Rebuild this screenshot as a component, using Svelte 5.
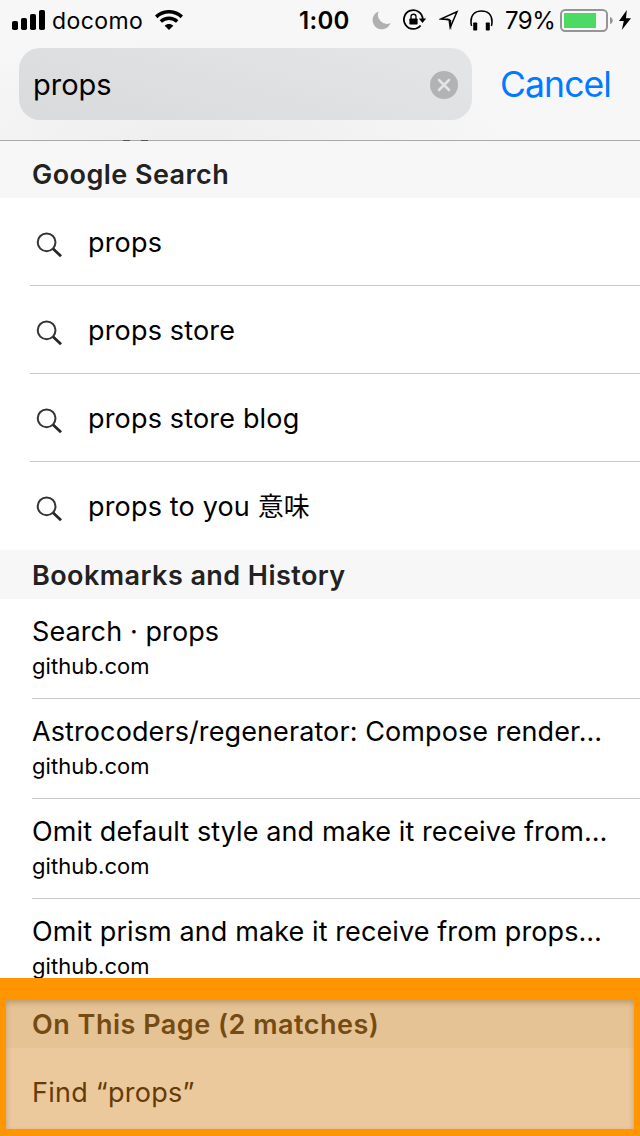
<script>
  const suggestions = [
    { text: 'props' },
    { text: 'props store' },
    { text: 'props store blog' },
    { text: 'props to you ', cjk: '意味' }
  ];
  const history = [
    { title: 'Search · props' },
    { title: 'Astrocoders/regenerator: Compose render…' },
    { title: 'Omit default style and make it receive from…' },
    { title: 'Omit prism and make it receive from props…' }
  ];
</script>

<main>
  <header>
    <div class="status">
      <svg class="signal" width="33" height="20" viewBox="0 0 33 20">
        <rect x="0" y="11" width="6" height="9" rx="1.8" />
        <rect x="9" y="8" width="6" height="12" rx="1.8" />
        <rect x="18" y="4" width="6" height="16" rx="1.8" />
        <rect x="27" y="0" width="6" height="20" rx="1.8" />
      </svg>
      <span class="carrier">docomo</span>
      <svg class="wifi" width="28" height="20" viewBox="0 0 28 20">
        <path d="M1.2 6.8C8.500.1 19.500.1 26.800 6.800" fill="none" stroke="#000" stroke-width="3.600" />
        <path d="M5.800 11.600C10.500 7.200 17.500 7.200 22.200 11.600" fill="none" stroke="#000" stroke-width="3.400" />
        <path d="M9.700 15.800C12 13.300 16 13.300 18.300 15.800L14 20Z" />
      </svg>
      <span class="time">1:00</span>
      <svg class="moon" width="19" height="19" viewBox="0 0 19 19">
        <path d="M6.600.500A9.200 9.200 0 1 0 18.500 12.100A9 9 0 0 1 6.600.500Z" fill="#b0b0b1" />
      </svg>
      <svg class="lock" width="24" height="22" viewBox="0 0 24 22">
        <path d="M19.700 10A9.400 9.400 0 1 0 17.600 16.500" fill="none" stroke="#000" stroke-width="1.800" />
        <path d="M15.800 9.500H23.200L19.500 14Z" />
        <rect x="6.400" y="9.500" width="8.200" height="6" rx=".8" />
        <path d="M8 10V7.500C8 4.500 13 4.500 13 7.500V10" fill="none" stroke="#000" stroke-width="1.300" />
      </svg>
      <svg class="location" width="20" height="20" viewBox="0 0 20 20">
        <path d="M18 1.800L2 8.900L10.100 9.700L11.200 17.500Z" fill="none" stroke="#000" stroke-width="1.500" />
        <path d="M0 9.200L9.500 8.500V10.200ZM10 9.500L12.200 10V20Z" />
      </svg>
      <svg class="headphones" width="23" height="21" viewBox="0 0 23 21">
        <path d="M1.600 16C1 14.500 1 13 1 11.500C1 4.500 5.500 1 11.500 1S22 4.500 22 11.500C22 13 22 14.500 21.400 16" fill="none" stroke="#000" stroke-width="1.600" />
        <rect x="3.200" y="12.500" width="4" height="8" rx=".7" />
        <rect x="15.800" y="12.500" width="4" height="8" rx=".7" />
      </svg>
      <span class="percent">79%</span>
      <svg class="battery" width="53" height="23" viewBox="0 0 53 23">
        <rect x="1" y="1" width="46" height="21" rx="4.200" fill="none" stroke="#959597" stroke-width="2" />
        <rect x="4" y="4" width="32" height="15" fill="#4cd964" />
        <path d="M50 8C53.700 9 53.700 14 50 15Z" fill="#959597" />
      </svg>
      <svg class="bolt" width="12" height="20" viewBox="0 0 12 20">
        <path d="M7.800 0L0 11H4.800L2.800 20L12 8.200H7Z" />
      </svg>
    </div>
    <div class="searchbar">
      <div class="field">
        <span>props</span>
        <svg width="28" height="28" viewBox="0 0 28 28">
          <circle cx="14" cy="14" r="14" fill="#b2b3b5" />
          <path d="M9 9L19 19M19 9L9 19" stroke="#e4e4e6" stroke-width="2.500" stroke-linecap="round" />
        </svg>
      </div>
      <span class="cancel">Cancel</span>
    </div>
    <div class="peek"><i></i><i></i></div>
  </header>

  <h2 class="google">Google Search</h2>
  <ul class="suggestions">
    {#each suggestions as s}
      <li>
        <svg width="27" height="27" viewBox="0 0 27 27">
          <circle cx="10.600" cy="10.300" r="8.900" fill="none" stroke="#353535" stroke-width="2" />
          <path d="M17.100 16.700L25 24.300" stroke="#252525" stroke-width="2.700" />
        </svg>
        <span>{s.text}{#if s.cjk}<b>{s.cjk}</b>{/if}</span>
      </li>
    {/each}
  </ul>

  <h2 class="bookmarks">Bookmarks and History</h2>
  <ul class="history">
    {#each history as h}
      <li>
        <span class="title">{h.title}</span>
        <span class="domain">github.com</span>
      </li>
    {/each}
  </ul>

  <section>
    <div class="panel">
      <h2>On This Page (2 matches)</h2>
      <p>Find “props”</p>
    </div>
  </section>
</main>

<style>
  :global(body) { margin: 0; background: #fff; }
  main {
    width: 640px; height: 1136px; overflow: hidden;
    display: flex; flex-direction: column;
    font-family: Inter, "Noto Sans CJK JP", sans-serif;
    font-size: 27px; color: #000; background: #fff;
    white-space: nowrap;
  }
  header {
    height: 141px; box-sizing: border-box; flex: none;
    border-bottom: 1px solid #a9a9ab;
    display: flex; flex-direction: column;
    background: radial-gradient(ellipse 340px 110px at 190px 141px, #eee, #f7f7f7);
  }
  .status { height: 40px; display: flex; align-items: center; flex: none; }
  .status svg, .status span { flex: none; }
  .status span { padding-top: 1px; }
  .signal { margin-left: 12px; }
  .carrier { width: 91px; margin-left: 7px; font-size: 23px; letter-spacing: .4px; }
  .wifi { margin-left: 12px; }
  .time { width: 52px; margin-left: 116px; font-size: 24px; font-weight: 600; letter-spacing: .3px; }
  .moon { margin-left: 21px; }
  .lock { margin-left: 12px; }
  .location { margin-left: 12px; }
  .headphones { margin-left: 11px; }
  .percent { width: 48px; margin-left: 12px; font-size: 24px; letter-spacing: -.5px; }
  .battery { margin-left: 7px; margin-top: 1px; }
  .bolt { margin-left: 6px; }
  .searchbar { display: flex; padding: 8px 0 0 19px; align-items: center; }
  .field {
    width: 453px; height: 72px; border-radius: 21px; box-sizing: border-box;
    padding: 0 14px; display: flex; align-items: center; justify-content: space-between;
    background: linear-gradient(195deg, #e3e4e6 15%, #dadbdd 90%);
    font-size: 29px;
  }
  .field svg { margin-top: 2px; }
  .cancel { margin-left: 28px; font-size: 35.5px; color: #007aff; letter-spacing: -.9px; padding-top: 1px; }
  .peek { display: flex; gap: 11px; height: 1px; margin: 20px 0 0 123px; }
  .peek i { width: 7px; height: 1px; background: #555; }
  h2 {
    margin: 0; height: 49px; line-height: 50px; padding-left: 32px; flex: none;
    box-sizing: border-box; background: #f7f7f7; color: #222;
    font-size: 27px; font-weight: 600; letter-spacing: .44px;
  }
  .google { height: 57px; padding-top: 8px; line-height: 52px; }
  .bookmarks { line-height: 52px; }
  ul { list-style: none; margin: 0; padding: 0; flex: none; }
  .suggestions li { height: 88px; display: flex; align-items: center; margin-left: 30px; border-bottom: 1px solid #c8c7cc; box-sizing: border-box; }
  .suggestions li:last-child { border-bottom-color: transparent; }
  .suggestions svg { margin: 8px 0 0 6px; flex: none; }
  .suggestions span { margin-left: 25px; padding-top: 2px; line-height: 36px; letter-spacing: .17px; }
  .suggestions b { font: 400 26px/30px "Noto Sans CJK JP", sans-serif; letter-spacing: 0; }
  .history { height: 379px; overflow: hidden; }
  .history li { height: 100px; margin-left: 32px; box-sizing: border-box; border-bottom: 1px solid #c8c7cc; display: flex; flex-direction: column; padding-top: 15px; }
  .title { line-height: 36px; letter-spacing: .1px; }
  .domain { font-size: 22px; line-height: 32px; letter-spacing: .08px; }
  section { height: 158px; box-sizing: border-box; padding: 22px 6px 7px; background: #ff9500; flex: none; }
  .panel { height: 129px; background: #ebc99c; box-shadow: inset 0 3px 6px -1px rgba(70, 50, 20, .38); overflow: hidden; }
  .panel h2 { height: 48px; line-height: 49px; padding-left: 26px; background: rgba(205, 165, 115, .16); color: #754b14; letter-spacing: .5px; }
  p { margin: 0; padding-left: 26px; line-height: 90px; color: #653c08; letter-spacing: .25px; }
</style>
